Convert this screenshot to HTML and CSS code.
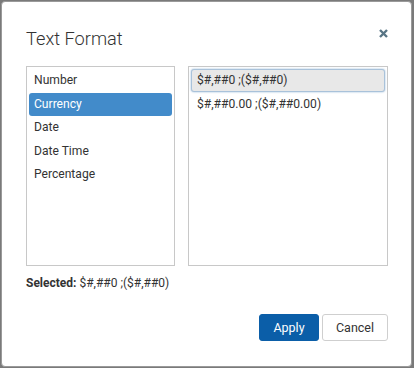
FILE: index.html
```html
<!DOCTYPE html>
<html>
<head>
<meta charset="utf-8">
<link rel="stylesheet" href="styles.css">
</head>
<body>
<div class="dialog">
  <div class="header">
    <h1 class="title">Text Format</h1>
    <svg class="close" width="9" height="9" viewBox="0 0 9 9"><path d="M1 1 L8 8 M8 1 L1 8" stroke="#587585" stroke-width="2.4" stroke-linecap="butt"/></svg>
  </div>
  <div class="lists">
    <ul class="list list-left">
      <li class="item">Number</li>
      <li class="item active">Currency</li>
      <li class="item">Date</li>
      <li class="item">Date Time</li>
      <li class="item">Percentage</li>
    </ul>
    <ul class="list list-right">
      <li class="item focused">$#,##0 ;($#,##0)</li>
      <li class="item">$#,##0.00 ;($#,##0.00)</li>
    </ul>
  </div>
  <div class="selected"><b>Selected:</b> $#,##0 ;($#,##0)</div>
  <div class="footer">
    <button class="btn btn-primary">Apply</button>
    <button class="btn btn-default">Cancel</button>
  </div>
</div>
</body>
</html>
```
FILE: styles.css
```css
html, body {
  margin: 0;
  padding: 0;
  background: #7a7a7a;
  height: 368px;
  overflow: hidden;
}
.dialog {
  box-sizing: border-box;
  margin: 1px 2px 0 1px;
  width: 411px;
  height: 366px;
  background: #fff;
  border: 1px solid #9a9a9a;
  border-radius: 4px;
  padding: 0 23px 0 24px;
  font-family: Roboto, "Liberation Sans", sans-serif;
  color: #333;
  font-size: 12px;
  display: flex;
  flex-direction: column;
}
.header {
  display: flex;
  justify-content: space-between;
  align-items: flex-start;
  padding-top: 26px;
  height: 38px;
}
.title {
  margin: 0;
  font-size: 18.2px;
  font-weight: 300;
  line-height: 22px;
  color: #333;
}
.close {
  margin-top: 1px;
  margin-right: 0;
}
.lists {
  display: flex;
  gap: 13px;
}
.list {
  list-style: none;
  margin: 0;
  padding: 2px;
  height: 200px;
  box-sizing: border-box;
  border: 1px solid #c8c8c8;
}
.list-left { width: 149px; flex: none; }
.list-right { flex: 1; }
.item {
  height: 23.6px;
  line-height: 23.6px;
  padding-left: 5px;
  border-radius: 3px;
  white-space: nowrap;
  font-size: 12.1px;
}
.list-right .item { padding-left: 6px; }
.item.active {
  background: #428bca;
  color: #fff;
}
.item.focused {
  box-sizing: border-box;
  height: 23px;
  line-height: 21px;
  background: #e8e8e8;
  border: 1px solid #a9c2da;
  box-shadow: 0 0 2px #8fb2d3;
  padding-left: 5px;
  margin-bottom: 1px;
}
.selected {
  margin-top: 10px;
  line-height: 15px;
  font-size: 12px;
}
.selected b { font-weight: 700; }
.footer {
  display: flex;
  justify-content: flex-end;
  gap: 3px;
  margin-top: 23px;
}
.btn {
  font-family: Roboto, "Liberation Sans", sans-serif;
  font-size: 12.5px;
  height: 27px;
  border-radius: 3px;
  cursor: pointer;
}
.btn-primary {
  width: 60px;
  background: #0b5ea8;
  border: 1px solid #0b5ea8;
  color: #fff;
}
.btn-default {
  width: 66px;
  background: #fff;
  border: 1px solid #cfcfcf;
  color: #333;
}
```
